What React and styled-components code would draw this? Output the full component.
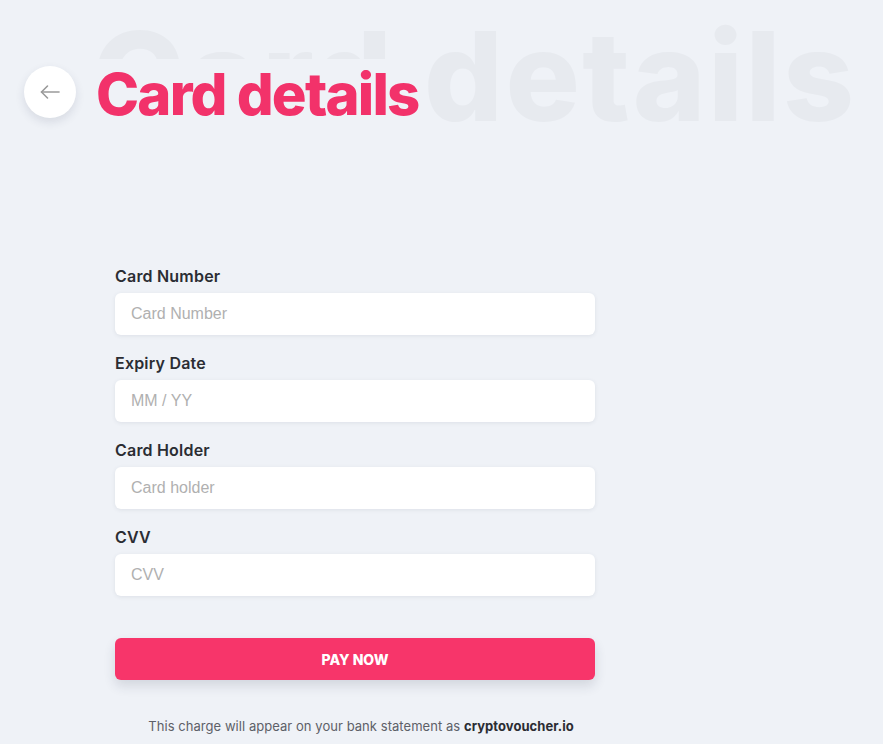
import React from "react";
import styled, { createGlobalStyle } from "styled-components";

const Global = createGlobalStyle`
  html, body { margin: 0; padding: 0; background: #eff2f7; }
  body { font-family: Inter, "Noto Sans", sans-serif; }
  * { box-sizing: border-box; }
`;

const Page = styled.div`
  width: 883px;
  min-height: 744px;
  background: #eff2f7;
  position: relative;
  overflow: hidden;
`;

const Header = styled.header`
  position: relative;
  height: 150px;
  display: flex;
  align-items: flex-start;
  padding: 66px 0 0 24px;
  gap: 20px;
`;

const Watermark = styled.div`
  position: absolute;
  left: 92px;
  top: 1px;
  font-family: Inter, sans-serif;
  font-weight: 800;
  font-size: 124px;
  letter-spacing: 2.4px;
  color: #e7eaef;
  white-space: nowrap;
  pointer-events: none;
  user-select: none;
`;

const BackButton = styled.button`
  position: relative;
  width: 52px;
  height: 52px;
  border-radius: 50%;
  border: none;
  background: #fff;
  box-shadow: 0 4px 10px rgba(40, 50, 80, 0.12);
  display: flex;
  align-items: center;
  justify-content: center;
  padding: 0;
  cursor: pointer;
  flex-shrink: 0;
`;

const Title = styled.h1`
  position: relative;
  margin: -7px 0 0 0;
  padding: 0 4px 0 0;
  font-family: Inter, sans-serif;
  font-weight: 800;
  font-size: 58px;
  letter-spacing: -1.8px;
  line-height: 70px;
  background: #eff2f7;
  color: #f2326a;
  white-space: nowrap;
`;

const Form = styled.form`
  width: 480px;
  margin: 116px 0 0 115px;
  display: flex;
  flex-direction: column;
`;

const Field = styled.div`
  display: flex;
  flex-direction: column;
  margin-bottom: 18px;
`;

const Label = styled.label`
  font-family: Inter, sans-serif;
  font-weight: 600;
  font-size: 16px;
  letter-spacing: 0.2px;
  color: #2b2d33;
  line-height: 20px;
  margin-bottom: 7px;
`;

const Input = styled.input`
  height: 42px;
  width: 100%;
  border: none;
  border-radius: 6px;
  background: #fff;
  box-shadow: 0 1px 4px rgba(40, 50, 80, 0.09);
  padding: 0 16px;
  font-family: "Liberation Sans", Arial, sans-serif;
  font-size: 16px;
  color: #333;
  outline: none;
  &::placeholder { color: #b0b0b0; }
`;

const PayButton = styled.button`
  margin-top: 24px;
  height: 42px;
  width: 100%;
  border: none;
  border-radius: 6px;
  background: #f7356a;
  color: #fff;
  font-family: Inter, sans-serif;
  font-weight: 800;
  font-size: 14px;
  letter-spacing: 0;
  box-shadow: 0 6px 12px rgba(40, 50, 80, 0.14);
  cursor: pointer;
`;

const Note = styled.p`
  margin: 38px 0 0 0;
  padding-left: 12px;
  text-align: center;
  font-family: Inter, sans-serif;
  font-size: 13px;
  color: #5d6068;
  letter-spacing: 0.05px;
  white-space: nowrap;
  b { color: #2b2d33; font-weight: 700; }
`;

const fields = [
  { label: "Card Number", placeholder: "Card Number" },
  { label: "Expiry Date", placeholder: "MM / YY" },
  { label: "Card Holder", placeholder: "Card holder" },
  { label: "CVV", placeholder: "CVV" },
];

export default function App() {
  return (
    <Page>
      <Global />
      <Header>
        <Watermark aria-hidden="true">Card details</Watermark>
        <BackButton type="button" aria-label="Back">
          <svg width="24" height="24" viewBox="0 0 24 24" fill="none" stroke="#9a9a9a" strokeWidth="1.6" strokeLinecap="round" strokeLinejoin="round">
            <path d="M21 12H3.5" />
            <path d="M9.5 6L3.5 12L9.5 18" />
          </svg>
        </BackButton>
        <Title>Card details</Title>
      </Header>
      <Form onSubmit={(e) => e.preventDefault()}>
        {fields.map((f) => (
          <Field key={f.label}>
            <Label>{f.label}</Label>
            <Input placeholder={f.placeholder} />
          </Field>
        ))}
        <PayButton type="submit">PAY NOW</PayButton>
        <Note>
          This charge will appear on your bank statement as <b>cryptovoucher.io</b>
        </Note>
      </Form>
    </Page>
  );
}
